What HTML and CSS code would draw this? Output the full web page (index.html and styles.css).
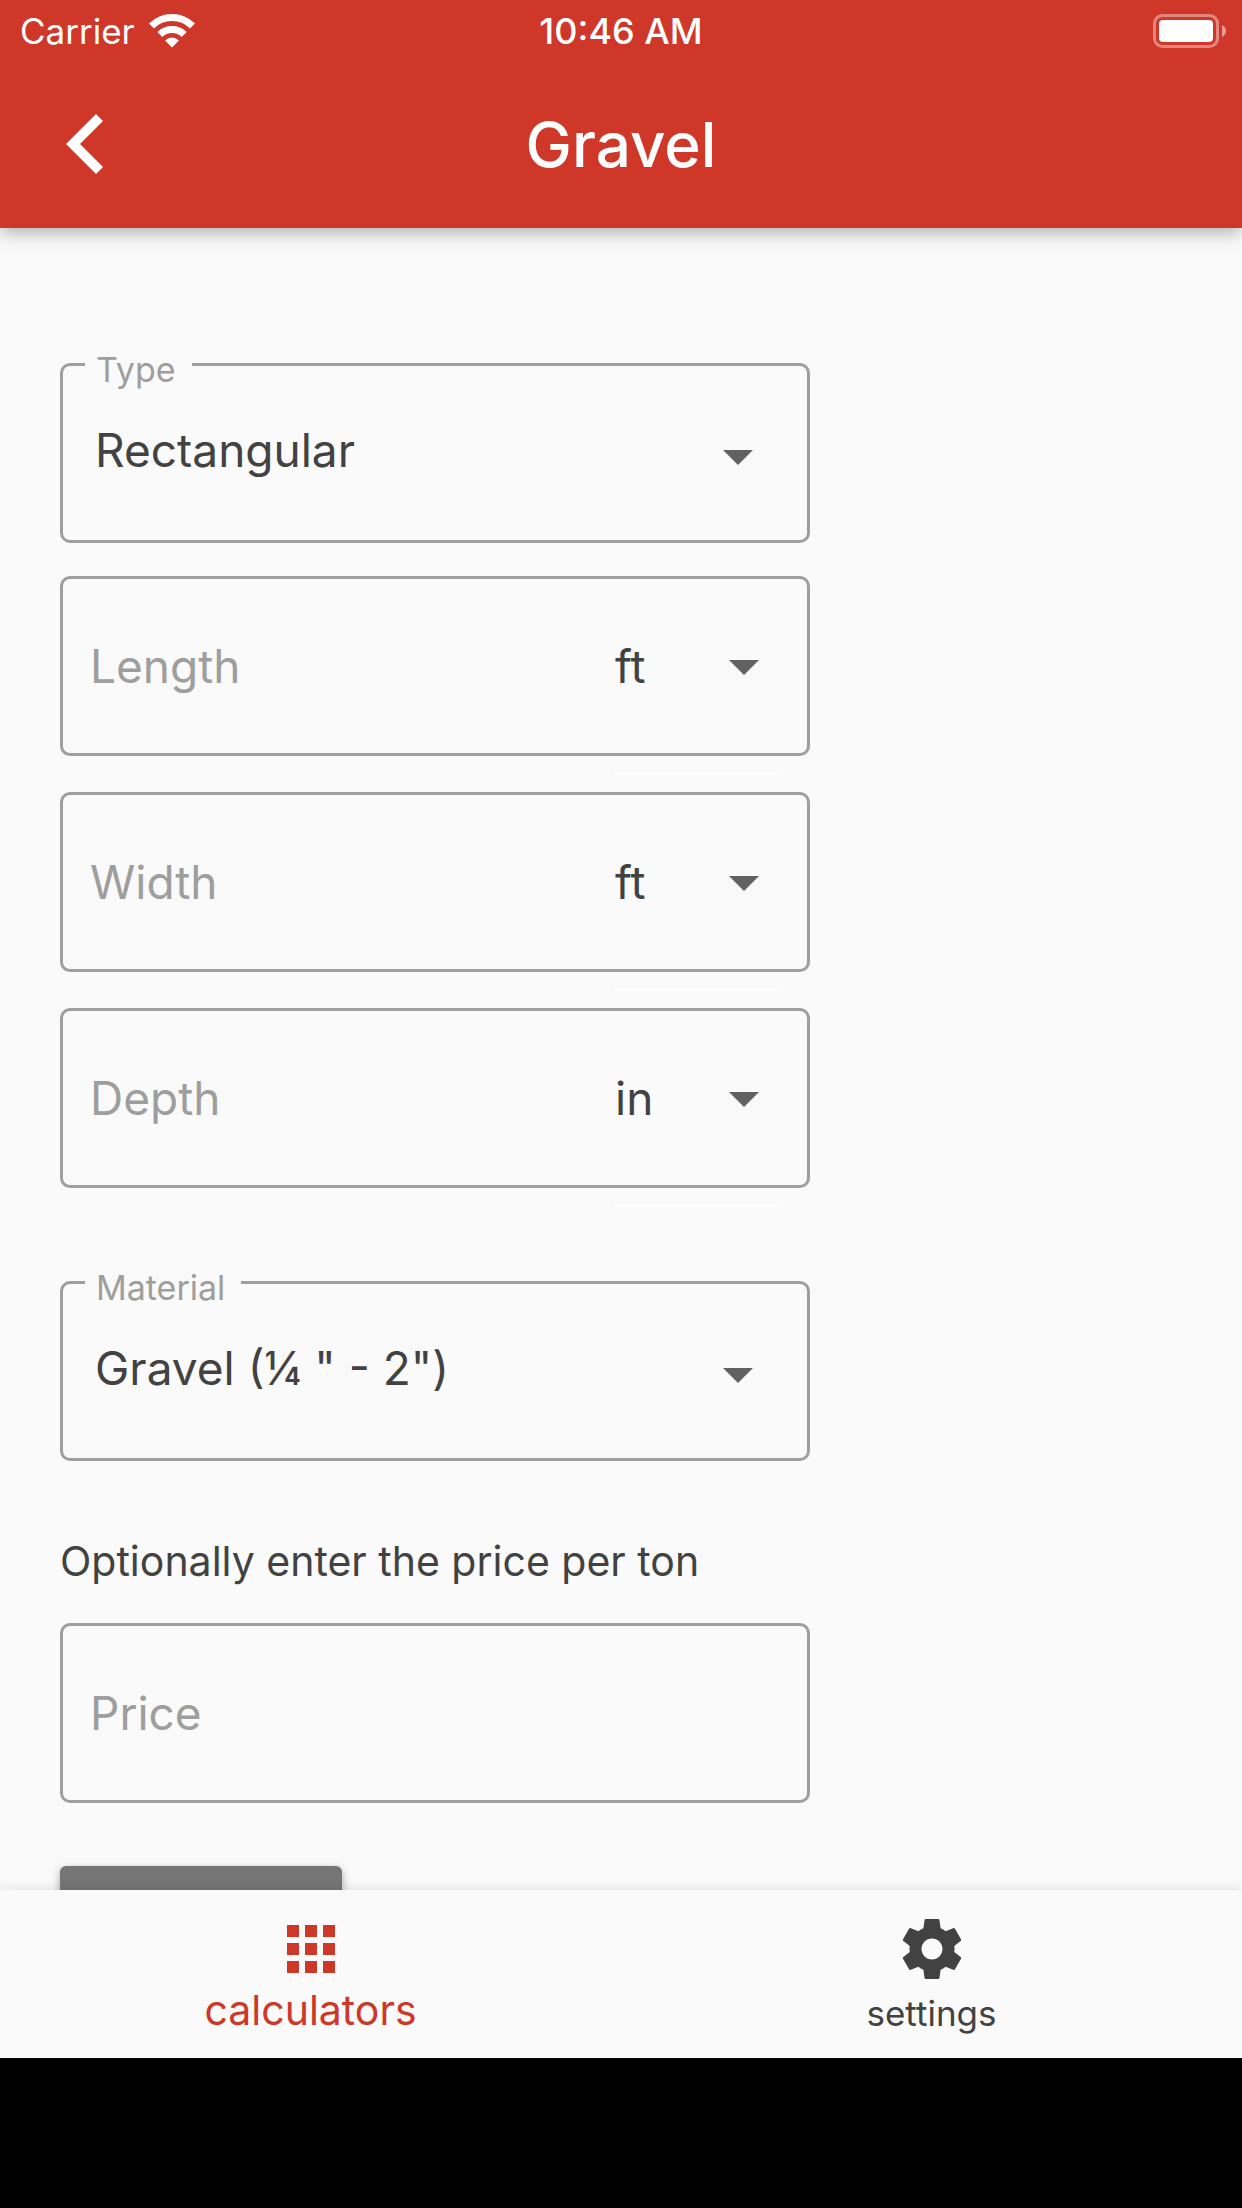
FILE: index.html
```html
<!DOCTYPE html>
<html lang="en">
<head>
<meta charset="UTF-8">
<meta name="viewport" content="width=device-width, initial-scale=1.0">
<title>Gravel</title>
<link rel="stylesheet" href="styles.css">
</head>
<body>
<header class="app-header">
    <div class="status-bar">
        <div class="carrier">
            <span>Carrier</span>
            <svg class="wifi" viewBox="0 0 46 34" fill="none" stroke="#fff" stroke-width="7">
                <path d="M2.500 12A29 29 0 0 1 43.500 12"/>
                <path d="M10.800 20.500A17.500 17.500 0 0 1 35.200 20.500"/>
                <path d="M16 26.500Q23 20.500 30 26.500L23 33.500Z" fill="#fff" stroke="none"/>
            </svg>
        </div>
        <span class="time">10:46 AM</span>
        <svg class="battery" viewBox="0 0 73 34">
            <rect x="1.500" y="1.500" width="63" height="31" rx="8" fill="none" stroke="#fff" stroke-opacity=".4" stroke-width="3"/>
            <rect x="6" y="6" width="54" height="22" rx="4" fill="#fff"/>
            <path d="M69 11q4 2 4 6t-4 6z" fill="#fff" fill-opacity=".5"/>
        </svg>
    </div>
    <div class="title-bar">
        <button class="back-button" type="button" aria-label="Back">
            <svg viewBox="0 0 37 60"><path d="M30 0L0 30l30 30 7-7-23-23L37 7z" fill="#fff"/></svg>
        </button>
        <h1>Gravel</h1>
    </div>
</header>

<main>
    <form class="calculator">
        <div class="field outlined">
            <label for="type">Type</label>
            <select id="type">
                <option>Rectangular</option>
                <option>Circular</option>
            </select>
        </div>

        <div class="dimensions">
            <div class="field">
                <input id="length" type="text" placeholder="Length" aria-label="Length">
                <div class="unit">
                    <select aria-label="Length unit">
                        <option>ft</option>
                        <option>in</option>
                    </select>
                </div>
            </div>
            <div class="field">
                <input id="width" type="text" placeholder="Width" aria-label="Width">
                <div class="unit">
                    <select aria-label="Width unit">
                        <option>ft</option>
                        <option>in</option>
                    </select>
                </div>
            </div>
            <div class="field">
                <input id="depth" type="text" placeholder="Depth" aria-label="Depth">
                <div class="unit">
                    <select aria-label="Depth unit">
                        <option>in</option>
                        <option>ft</option>
                    </select>
                </div>
            </div>
        </div>

        <div class="field outlined">
            <label for="material">Material</label>
            <select id="material">
                <option>Gravel (¼ " - 2")</option>
            </select>
        </div>

        <label class="hint" for="price">Optionally enter the price per ton</label>
        <div class="field">
            <input id="price" type="text" placeholder="Price">
        </div>

        <button class="submit-button" type="button" aria-label="Calculate"></button>
    </form>
</main>

<nav class="bottom-nav">
    <a class="active" href="#calculators">
        <svg viewBox="0 0 24 24" fill="currentColor"><path d="M4 8h4V4H4v4zm6 12h4v-4h-4v4zm-6 0h4v-4H4v4zm0-6h4v-4H4v4zm6 0h4v-4h-4v4zm6-10v4h4V4h-4zm-6 4h4V4h-4v4zm6 6h4v-4h-4v4zm0 6h4v-4h-4v4z"/></svg>
        <span>calculators</span>
    </a>
    <a href="#settings">
        <svg viewBox="0 0 24 24" fill="currentColor"><path d="M19.430 12.980c.04-.32.07-.64.07-.98s-.03-.66-.07-.98l2.110-1.650c.19-.15.24-.42.12-.64l-2-3.460c-.12-.22-.39-.3-.61-.22l-2.490 1c-.52-.4-1.080-.73-1.690-.98l-.38-2.650C14.460 2.180 14.250 2 14 2h-4c-.25 0-.46.18-.49.42l-.38 2.650c-.61.25-1.170.59-1.690.98l-2.490-1c-.23-.09-.49 0-.61.22l-2 3.460c-.13.22-.07.49.12.64l2.110 1.650c-.04.32-.07.65-.07.98s.03.66.07.98l-2.110 1.650c-.19.15-.24.42-.12.64l2 3.460c.12.22.39.3.61.22l2.490-1c.52.4 1.080.73 1.690.98l.38 2.650c.03.24.24.42.49.42h4c.25 0 .46-.18.49-.42l.38-2.650c.61-.25 1.170-.59 1.690-.98l2.490 1c.23.09.49 0 .61-.22l2-3.460c.12-.22.07-.49-.12-.64l-2.110-1.650zM12 15.500c-1.930 0-3.500-1.570-3.500-3.500s1.570-3.500 3.500-3.500 3.500 1.570 3.500 3.500-1.570 3.500-3.500 3.500z"/></svg>
        <span>settings</span>
    </a>
</nav>
</body>
</html>
```
FILE: styles.css
```css
* {
    box-sizing: border-box;
}

body {
    margin: 0;
    height: 100vh;
    padding-bottom: 150px;
    display: flex;
    flex-direction: column;
    background-color: #000;
    color: #424242;
    font-family: Inter, "Liberation Sans", sans-serif;
    font-size: 46px;
}

input,
select,
button {
    font: inherit;
    color: inherit;
    margin: 0;
    border: none;
    background: none;
    outline: none;
}

/* Header */

.app-header {
    position: relative;
    z-index: 1;
    flex: none;
    background-color: #cf3729;
    color: #fff;
    box-shadow: 0 3px 18px rgba(0, 0, 0, 0.35);
}

.status-bar {
    display: grid;
    grid-template-columns: 1fr auto 1fr;
    align-items: center;
    height: 60px;
    padding: 2px 16px 0;
    font-size: 36px;
}

.carrier {
    display: flex;
    align-items: center;
    gap: 14px;
    padding-left: 4px;
    font-size: 35px;
}

.wifi {
    width: 46px;
    height: 34px;
}

.time {
    font-weight: 500;
}

.battery {
    width: 73px;
    height: 34px;
    justify-self: end;
}

.title-bar {
    display: grid;
    grid-template-columns: 1fr auto 1fr;
    align-items: center;
    height: 168px;
    padding: 0 42px;
}

.title-bar h1 {
    margin: 0;
    font-size: 62px;
    font-weight: 500;
}

.back-button {
    justify-self: start;
    padding: 24px;
    cursor: pointer;
}

.back-button svg {
    display: block;
    width: 37px;
    height: 60px;
}

/* Form */

main {
    flex: 1;
    min-height: 0;
    overflow: hidden;
    background-color: #fafafa;
}

.calculator {
    padding: 135px 60px 0;
}

.field {
    position: relative;
    display: flex;
    width: 100%;
    max-width: 750px;
    height: 180px;
    border: 3px solid #9e9e9e;
    border-radius: 10px;
}

.field input {
    flex: 1;
    min-width: 0;
    padding: 0 27px;
}

.field input::placeholder {
    color: #9e9e9e;
    opacity: 1;
}

.field select {
    appearance: none;
    width: 100%;
    cursor: pointer;
}

.outlined select {
    padding: 0 80px 6px 32px;
}

/* label sits on the top border and covers it */
.outlined label {
    position: absolute;
    top: -20px;
    left: 22px;
    padding: 0 16px 0 11px;
    background-color: #fafafa;
    color: #9e9e9e;
    font-size: 34px;
    line-height: 48px;
}

/* drop-down arrows */
.outlined::after,
.unit::before {
    content: "";
    position: absolute;
    top: 84px;
    right: 54px;
    border: 15px solid transparent;
    border-top-color: #616161;
    border-bottom: none;
    pointer-events: none;
}

.unit {
    position: relative;
    display: flex;
    width: 165px;
    margin-right: 27px;
}

.unit::before {
    top: 81px;
    right: 21px;
}

.unit::after {
    content: "";
    position: absolute;
    left: 0;
    right: 0;
    bottom: -22px;
    height: 3px;
    background-color: #fff;
}

.dimensions {
    display: flex;
    flex-direction: column;
    gap: 36px;
    margin: 33px 0 93px;
}

.hint {
    display: block;
    margin: 75px 0 36px;
    font-size: 41px;
    line-height: 51px;
}

.submit-button {
    display: block;
    width: 282px;
    height: 108px;
    margin-top: 63px;
    border-radius: 6px;
    background-color: #757575;
    box-shadow: 0 3px 9px rgba(0, 0, 0, 0.35);
    cursor: pointer;
}

/* Bottom navigation */

.bottom-nav {
    position: relative;
    flex: none;
    display: flex;
    height: 168px;
    background-color: #fafafa;
    box-shadow: 0 0 12px rgba(0, 0, 0, 0.12);
}

.bottom-nav a {
    flex: 1;
    display: flex;
    flex-direction: column;
    align-items: center;
    padding-top: 23px;
    color: #424242;
    font-size: 35px;
    line-height: 56px;
    text-decoration: none;
}

.bottom-nav .active {
    color: #cf3729;
    font-size: 41px;
    line-height: 50px;
}

.bottom-nav svg {
    width: 72px;
    height: 72px;
}
```
